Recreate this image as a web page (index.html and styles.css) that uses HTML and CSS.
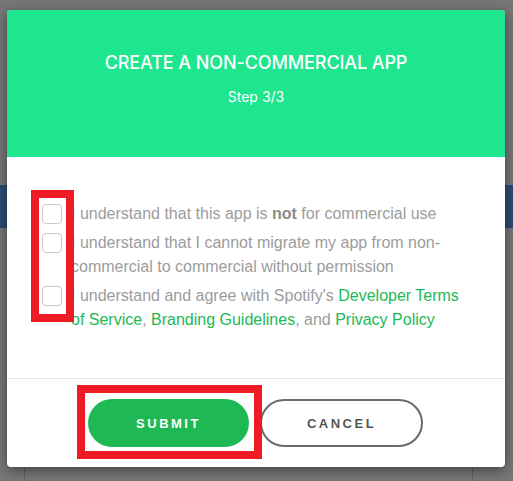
FILE: index.html
```html
<!DOCTYPE html>
<html>
<head>
<meta charset="utf-8">
<link rel="stylesheet" href="styles.css">
</head>
<body>
<div class="backdrop">
  <div class="band"></div>
  <div class="card"></div>
</div>
<div class="modal">
  <div class="modal-header">
    <h1 class="title">CREATE A NON-COMMERCIAL APP</h1>
    <div class="step">Step 3/3</div>
  </div>
  <div class="modal-body">
    <label class="row"><span class="box"></span><span class="text">I understand that this app is <b>not</b> for commercial use</span></label>
    <label class="row"><span class="box"></span><span class="text">I understand that I cannot migrate my app from non-commercial to commercial without permission</span></label>
    <label class="row"><span class="box"></span><span class="text">I understand and agree with Spotify's <a class="link">Developer Terms of Service</a>, <a class="link">Branding Guidelines</a>, and <a class="link">Privacy Policy</a></span></label>
  </div>
  <div class="modal-footer">
    <button class="btn btn-submit">SUBMIT</button>
    <button class="btn btn-cancel">CANCEL</button>
  </div>
</div>
<div class="mark mark-boxes"></div>
<div class="mark mark-submit"></div>
</body>
</html>
```
FILE: styles.css
```css
html, body {
  margin: 0;
  padding: 0;
}
body {
  width: 513px;
  height: 481px;
  background: #767676;
  overflow: hidden;
  position: relative;
  font-family: "Liberation Sans", Arial, sans-serif;
}
.backdrop {
  display: flex;
  flex-direction: column;
}
.band {
  margin-top: 185px;
  height: 43px;
  background: #2a4b70;
}
.card {
  margin: 239px 0 0 24px;
  width: 447px;
  height: 20px;
  border-left: 1px solid #5e5e5e;
  border-right: 1px solid #5e5e5e;
}
.modal {
  position: absolute;
  left: 7px;
  top: 10px;
  width: 498px;
  height: 457px;
  background: #fff;
  border-radius: 4px;
  box-shadow: 0 3px 12px rgba(0, 0, 0, 0.45);
  overflow: hidden;
  display: flex;
  flex-direction: column;
}
.modal-header {
  height: 147px;
  box-sizing: border-box;
  padding-top: 41px;
  background: #1de68e;
  color: #fff;
  text-align: center;
}
.title {
  margin: 0;
  font-family: Inter, "Noto Sans", sans-serif;
  font-weight: 500;
  font-size: 18px;
  line-height: 24px;
  letter-spacing: -0.1px;
}
.step {
  margin-top: 12px;
  font-family: Inter, "Noto Sans", sans-serif;
  font-size: 14px;
  line-height: 20px;
}
.modal-body {
  height: 221px;
  box-sizing: border-box;
  padding: 45px 35px 0 35px;
  display: flex;
  flex-direction: column;
  gap: 5px;
}
.row {
  display: grid;
  grid-template-columns: 20px 1fr;
  column-gap: 9px;
  font-size: 16px;
  line-height: 24px;
  color: #9c9c9c;
}
.box {
  width: 18px;
  height: 18px;
  margin-top: 2px;
  border: 1px solid #c8c8c8;
  border-radius: 4px;
  background: #fff;
}
.text b {
  color: #8a8a8a;
}
.link {
  color: #1db954;
}
.modal-footer {
  border-top: 1px solid #e5e5e5;
  padding: 20px 0 20px 81px;
  display: flex;
  gap: 11px;
}
.btn {
  height: 48px;
  border-radius: 24px;
  font-family: "Liberation Sans", Arial, sans-serif;
  font-weight: 700;
  font-size: 13px;
  letter-spacing: 2.5px;
  padding: 0;
  cursor: pointer;
}
.btn-submit {
  width: 161px;
  background: #1eb954;
  color: #fff;
  border: none;
}
.btn-cancel {
  width: 163px;
  background: #fff;
  color: #555;
  border: 2px solid #6a6a6a;
}
.mark {
  position: absolute;
  border: 8px solid #ed1c24;
  box-sizing: border-box;
}
.mark-boxes {
  left: 31px;
  top: 190px;
  width: 43px;
  height: 132px;
}
.mark-submit {
  left: 77px;
  top: 385px;
  width: 185px;
  height: 74px;
}
```
